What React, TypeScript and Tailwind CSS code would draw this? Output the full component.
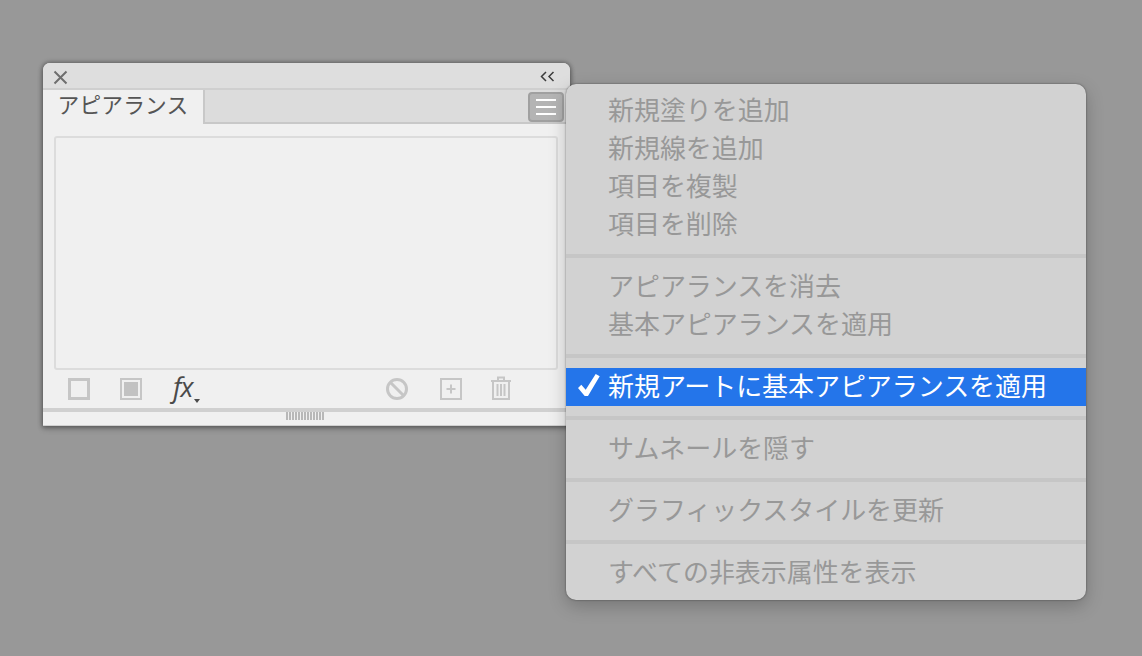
import { Fragment } from 'react';

const groups = [
  ['新規塗りを追加', '新規線を追加', '項目を複製', '項目を削除'],
  ['アピアランスを消去', '基本アピアランスを適用'],
  ['新規アートに基本アピアランスを適用'],
  ['サムネールを隠す'],
  ['グラフィックスタイルを更新'],
  ['すべての非表示属性を表示'],
];

function Panel() {
  return (
    <div className="absolute left-[43px] top-[63px] flex h-[363px] w-[527px] flex-col overflow-hidden rounded-t-[7px] bg-[#f0f0f0] shadow-[0_0_4px_1px_rgba(0,0,0,0.35),0_3px_6px_rgba(0,0,0,0.2)]">
      {/* title bar */}
      <div className="flex h-[27px] shrink-0 items-center justify-between border-b-2 border-[#cfcfcf] bg-[#dedede] pl-[10px] pr-[15px]">
        <svg className="mt-[4px]" width="15" height="15" viewBox="0 0 15 15">
          <path d="M1.5 1.5 L13.5 13.5 M13.5 1.5 L1.5 13.5" stroke="#6e6e6e" strokeWidth="2" fill="none" />
        </svg>
        <svg className="mt-[2px]" width="15" height="11" viewBox="0 0 15 11">
          <path d="M6 1 L1.5 5.5 L6 10 M13.5 1 L9 5.5 L13.5 10" stroke="#3c3c3c" strokeWidth="1.5" fill="none" />
        </svg>
      </div>

      {/* tab row */}
      <div className="flex h-[34px] shrink-0 bg-[#dcdcdc]">
        <div className="flex w-[162px] items-center justify-center border-r-2 border-[#c8c8c8] bg-[#f0f0f0] pb-[6px] text-[21.7px] leading-none tracking-[0.2px] text-[#555555]">
          アピアランス
        </div>
        <div className="flex flex-1 items-start justify-end border-b-2 border-[#c8c8c8] pr-[6px] pt-[2px]">
          <div className="flex h-[30px] w-[36px] flex-col items-center justify-center gap-[5px] rounded-[4px] border-2 border-[#a0a0a0] bg-[#b4b4b4]">
            <div className="h-[2px] w-[20px] bg-white" />
            <div className="h-[2px] w-[20px] bg-white" />
            <div className="h-[2px] w-[20px] bg-white" />
          </div>
        </div>
      </div>

      {/* list area */}
      <div className="flex-1 px-[11px] pt-[12px]">
        <div className="h-[234px] w-[504px] rounded-[3px] border-2 border-[#dcdcdc] bg-[#f0f0f0]" />
      </div>

      {/* footer icons */}
      <div className="flex h-[38px] shrink-0 items-center pl-[25px]">
        <svg width="22" height="22" viewBox="0 0 22 22">
          <rect x="1.5" y="1.5" width="19" height="19" fill="none" stroke="#c6c6c6" strokeWidth="3" />
        </svg>
        <svg className="ml-[30px]" width="22" height="22" viewBox="0 0 22 22">
          <rect x="1" y="1" width="20" height="20" fill="none" stroke="#c6c6c6" strokeWidth="2" />
          <rect x="4" y="4" width="14" height="14" fill="#c2c2c2" />
        </svg>
        <div className="relative ml-[30px] h-[30px] w-[34px]">
          <span className="absolute left-[1px] top-[-2px] font-['Open_Sans',sans-serif] text-[27px] font-normal italic leading-[30px] tracking-[-1px] text-[#4a4a4a]">
            fx
          </span>
          <svg className="absolute left-[22px] top-[25px]" width="6" height="4" viewBox="0 0 6 4">
            <path d="M0 0 H6 L3 4 Z" fill="#4a4a4a" />
          </svg>
        </div>
        <svg className="ml-[180px]" width="22" height="22" viewBox="0 0 22 22">
          <circle cx="11" cy="11" r="9.5" fill="none" stroke="#c6c6c6" strokeWidth="3" />
          <path d="M4.5 4.5 L17.5 17.5" stroke="#c6c6c6" strokeWidth="3" />
        </svg>
        <svg className="ml-[32px]" width="22" height="22" viewBox="0 0 22 22">
          <rect x="1" y="1" width="20" height="20" fill="none" stroke="#c6c6c6" strokeWidth="2" />
          <path d="M11 6.5 V15.5 M6.5 11 H15.5" stroke="#c6c6c6" strokeWidth="2" />
        </svg>
        <svg className="ml-[28px] -mt-[2px]" width="22" height="24" viewBox="0 0 22 24">
          <path d="M1 5 H21 M8 5 V1.5 H14 V5" fill="none" stroke="#c6c6c6" strokeWidth="2" />
          <path d="M3 5 V23 H19 V5" fill="none" stroke="#c6c6c6" strokeWidth="2" />
          <path d="M7.5 8 V20 M11 8 V20 M14.5 8 V20" stroke="#c6c6c6" strokeWidth="2" />
        </svg>
      </div>

      {/* resize grip */}
      <div className="flex h-[18px] shrink-0 items-start justify-center gap-[1px] border-y border-t-4 border-[#d0d0d0] pr-[4px]">
        {Array.from({ length: 13 }).map((_, i) => (
          <div key={i} className="h-[8px] w-[2px] bg-[#b8b8b8]" />
        ))}
      </div>
    </div>
  );
}

function Menu() {
  return (
    <div className="absolute left-[566px] top-[84px] flex w-[520px] flex-col rounded-[10px] bg-[#d2d2d2] py-[8px] shadow-[0_0_2px_rgba(0,0,0,0.5),0_6px_18px_rgba(0,0,0,0.22)]">
      {groups.map((items, g) => (
        <Fragment key={g}>
          {g > 0 && (
            <div className="flex h-[24px] items-center">
              <div className="h-[4px] w-full bg-[#c6c6c6]" />
            </div>
          )}
          {items.map((label) => {
            const on = label === '新規アートに基本アピアランスを適用';
            return (
              <div
                key={label}
                className={
                  on
                    ? 'relative flex h-[38px] items-center bg-[#2475ea] pb-[4px] pl-[42px] text-[26px] leading-none tracking-[-0.06px] text-white'
                    : 'flex h-[38px] items-center pb-[4px] pl-[42px] text-[26px] leading-none tracking-[-0.06px] text-[#989898]'
                }
              >
                {on && (
                  <svg className="absolute left-[12px] top-[6px]" width="22" height="23" viewBox="0 0 22 23">
                    <path d="M0 14 L6.7 22 H10 L21.7 2.3 L17.7 0 L7.7 15.7 L3.3 10.7 Z" fill="#ffffff" />
                  </svg>
                )}
                {label}
              </div>
            );
          })}
        </Fragment>
      ))}
    </div>
  );
}

export default function App() {
  return (
    <div className="relative h-[656px] w-[1142px] overflow-hidden bg-[#989898] font-['Noto_Sans_CJK_JP','Noto_Sans',sans-serif]">
      <Panel />
      <Menu />
    </div>
  );
}
